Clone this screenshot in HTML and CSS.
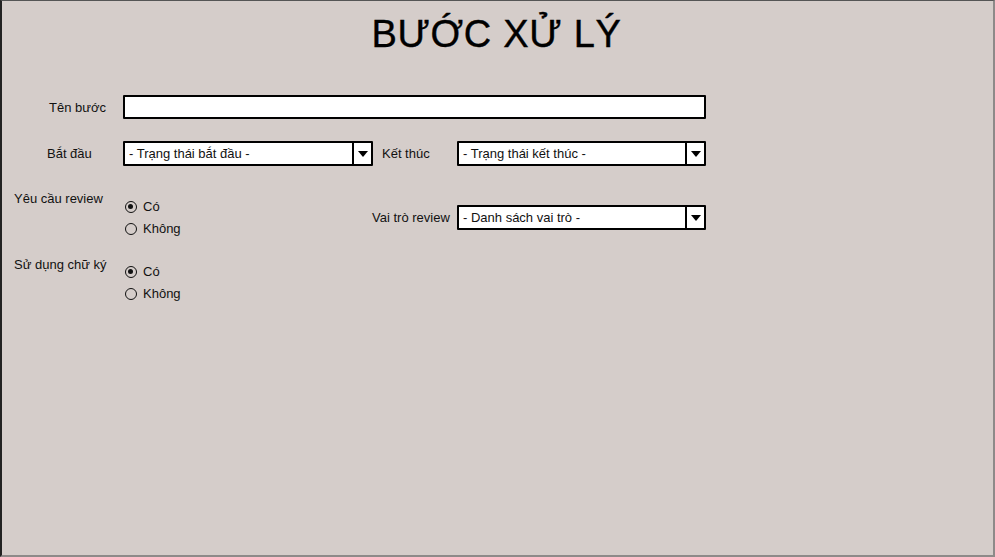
FILE: index.html
```html
<!DOCTYPE html>
<html lang="vi">
<head>
<meta charset="utf-8">
<title>Bước xử lý</title>
<link rel="stylesheet" href="styles.css">
</head>
<body>
<div class="frame">
  <h1 class="title">BƯỚC XỬ LÝ</h1>
  <div class="row row-name">
    <div class="lbl lbl-name">Tên bước</div>
    <div class="input input-wide"></div>
  </div>
  <div class="row row-state">
    <div class="lbl lbl-start">Bắt đầu</div>
    <div class="select select-start"><span class="sel-text">- Trạng thái bắt đầu -</span><span class="sel-arrow"></span></div>
    <div class="lbl-inline lbl-end">Kết thúc</div>
    <div class="select select-end"><span class="sel-text">- Trạng thái kết thúc -</span><span class="sel-arrow"></span></div>
  </div>
  <div class="row row-review">
    <div class="lbl lbl-long">Yêu cầu review</div>
    <div class="radios">
      <div class="radio"><span class="dot on"></span>Có</div>
      <div class="radio"><span class="dot"></span>Không</div>
    </div>
    <div class="role">
      <div class="lbl-inline lbl-role">Vai trò review</div>
      <div class="select select-role"><span class="sel-text">- Danh sách vai trò -</span><span class="sel-arrow"></span></div>
    </div>
  </div>
  <div class="row row-sign">
    <div class="lbl lbl-long">Sử dụng chữ ký</div>
    <div class="radios">
      <div class="radio"><span class="dot on"></span>Có</div>
      <div class="radio"><span class="dot"></span>Không</div>
    </div>
  </div>
</div>
</body>
</html>
```
FILE: styles.css
```css
html, body {
  margin: 0;
  padding: 0;
  background: #d5cdca;
}
.frame {
  box-sizing: border-box;
  width: 995px;
  height: 557px;
  background: #d5cdca;
  border-left: 2px solid #222;
  border-top: 1px solid #555;
  border-right: 2px solid #8e8a89;
  border-bottom: 2px solid #8e8a89;
  font-family: "Liberation Sans", Arial, sans-serif;
  font-size: 13px;
  color: #111;
  display: flex;
  flex-direction: column;
}
.title {
  margin: 13px 0 0 0;
  font-family: "Liberation Sans", Arial, sans-serif;
  font-weight: normal;
  font-size: 38px;
  line-height: 40px;
  letter-spacing: 0.7px;
  text-align: center;
  color: #000;
  padding-right: 2px;
  -webkit-text-stroke: 0.4px #000;
}
.row {
  display: flex;
  align-items: center;
}
.row-name { margin-top: 41px; }
.row-state { margin-top: 22px; }
.row-review { margin-top: 24px; align-items: flex-start; }
.row-sign { margin-top: 15px; align-items: flex-start; }
.lbl {
  box-sizing: border-box;
  width: 121px;
  flex: none;
}
.lbl-name { padding-left: 47px; }
.lbl-start { padding-left: 45px; }
.lbl-long { padding-left: 12px; line-height: 16px; padding-top: 1px; }
.row-sign .lbl-long { padding-top: 2px; }
.input {
  box-sizing: border-box;
  height: 24px;
  background: #fff;
  border: 2px solid #000;
  border-radius: 1px;
}
.input-wide { width: 583px; }
.select {
  box-sizing: border-box;
  height: 25px;
  background: #fff;
  border: 2px solid #000;
  border-radius: 1px;
  display: flex;
  align-items: center;
  flex: none;
}
.sel-text {
  flex: 1;
  padding-left: 4px;
  white-space: nowrap;
}
.sel-arrow {
  width: 17px;
  align-self: stretch;
  border-left: 2px solid #000;
  position: relative;
}
.sel-arrow::after {
  content: "";
  position: absolute;
  left: 4px;
  top: 8px;
  border-left: 5px solid transparent;
  border-right: 5px solid transparent;
  border-top: 6px solid #000;
}
.select-start { width: 250px; }
.lbl-inline { flex: none; }
.lbl-end { margin-left: 9px; width: 75px; }
.select-end { width: 249px; }
.radios {
  display: flex;
  flex-direction: column;
  width: 249px;
  flex: none;
  margin-top: 6px;
}
.radio {
  display: flex;
  align-items: center;
  height: 22px;
  line-height: 22px;
}
.dot {
  box-sizing: border-box;
  width: 12px;
  height: 12px;
  border: 1.5px solid #111;
  border-radius: 50%;
  margin-left: 2px;
  margin-right: 6px;
  position: relative;
  background: transparent;
}
.dot.on::after {
  content: "";
  position: absolute;
  left: 2px;
  top: 2px;
  width: 5px;
  height: 5px;
  border-radius: 50%;
  background: #111;
}
.role {
  display: flex;
  align-items: center;
  margin-top: 15px;
}
.lbl-role { width: 85px; }
.select-role { width: 249px; }
```
